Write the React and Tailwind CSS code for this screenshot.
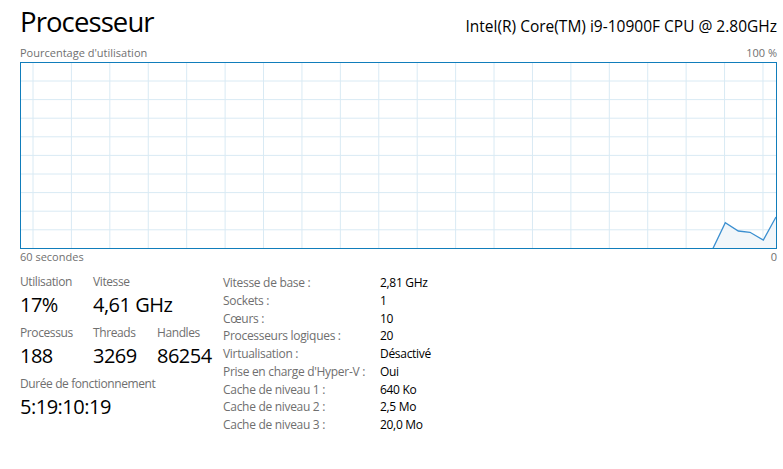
import React from 'react';

const vLines = Array.from({ length: 20 }, (_, i) => 12 + i * 38.42);
const hLines = Array.from({ length: 9 }, (_, i) => 18 + i * 18.6);

const graph = [
    [691.7, 186],
    [704.3, 159.7],
    [717.3, 168],
    [729, 169.3],
    [742.3, 177],
    [755, 154],
];

const specs = [
    ['Vitesse de base :', '2,81 GHz'],
    ['Sockets :', '1'],
    ['Cœurs :', '10'],
    ['Processeurs logiques :', '20'],
    ['Virtualisation :', 'Désactivé'],
    ["Prise en charge d'Hyper-V :", 'Oui'],
    ['Cache de niveau 1 :', '640 Ko'],
    ['Cache de niveau 2 :', '2,5 Mo'],
    ['Cache de niveau 3 :', '20,0 Mo'],
];

const Stat = ({ label, value, className = '' }) => (
    <div className={className}>
        <div className="text-[12px] leading-[16px] tracking-[-0.4px] text-[#6f6f6f]">{label}</div>
        <div className="mt-[1px] text-[20px] leading-[28px] tracking-[-0.5px] text-black">{value}</div>
    </div>
);

const App = () => {
    const line = graph.map((p) => p.join(',')).join(' ');
    const area = `${line} 755,186 691.7,186`;

    return (
        <div className="w-[783px] h-[469px] overflow-hidden bg-white font-['Open_Sans',sans-serif] px-[20px] pt-[5px]">
            {/* Header */}
            <div className="flex items-baseline justify-between w-[757px]">
                <h1 className="text-[27.5px] leading-[34px] tracking-[-0.9px] text-black">Processeur</h1>
                <span className="text-[15.5px] text-black">Intel(R) Core(TM) i9-10900F CPU @ 2.80GHz</span>
            </div>

            {/* Chart labels */}
            <div className="mt-[7px] flex justify-between w-[757px] text-[11px] leading-[14px] text-[#707070]">
                <span>Pourcentage d'utilisation</span>
                <span>100 %</span>
            </div>

            {/* Chart */}
            <div className="mt-[2px] w-[757px] h-[187px] border border-[#117dbb]">
                <svg width="755" height="185" viewBox="0 0 755 185" className="block">
                    {vLines.map((x) => (
                        <line key={'v' + x} x1={x} y1="0" x2={x} y2="185" stroke="#d9eaf4" strokeWidth="1" />
                    ))}
                    {hLines.map((y) => (
                        <line key={'h' + y} x1="0" y1={y} x2="755" y2={y} stroke="#d9eaf4" strokeWidth="1" />
                    ))}
                    <polygon points={area} fill="#f1f6fa" />
                    <polyline points={line} fill="none" stroke="#3b8fd0" strokeWidth="1.3" />
                </svg>
            </div>

            <div className="mt-[1px] flex justify-between w-[757px] text-[11px] leading-[14px] text-[#707070]">
                <span>60 secondes</span>
                <span>0</span>
            </div>

            {/* Stats */}
            <div className="mt-[10px] flex">
                <div className="w-[203px] flex flex-col gap-[6px]">
                    <div className="flex">
                        <Stat label="Utilisation" value="17%" className="w-[73px]" />
                        <Stat label="Vitesse" value="4,61 GHz" />
                    </div>
                    <div className="flex">
                        <Stat label="Processus" value="188" className="w-[73px]" />
                        <Stat label="Threads" value="3269" className="w-[64px]" />
                        <Stat label="Handles" value="86254" />
                    </div>
                    <Stat label="Durée de fonctionnement" value="5:19:10:19" />
                </div>

                <div className="mt-[0px] text-[12px] leading-[17.75px]">
                    {specs.map(([k, v]) => (
                        <div key={k} className="flex">
                            <span className="w-[157px] text-[#6f6f6f] tracking-[-0.3px]">{k}</span>
                            <span className="text-black tracking-[-0.3px]">{v}</span>
                        </div>
                    ))}
                </div>
            </div>
        </div>
    );
};

export default App;
